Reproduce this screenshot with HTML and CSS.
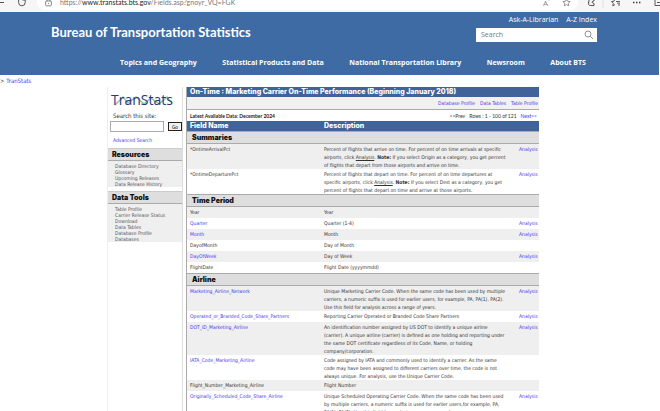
FILE: index.html
```html
<!DOCTYPE html>
<html lang="en">
<head>
<meta charset="utf-8">
<title>TranStats - Fields</title>
<link rel="stylesheet" href="styles.css">
</head>
<body>
<div class="browser">
  <div class="nav-icons">
    <svg width="30" height="10" viewBox="0 0 30 10" fill="none" stroke="#555"><path d="M0 2.500h4M18.600 0v2.500a3.300 3.300 0 0 0 6.600 0V0M22.500 0h2.700"/></svg>
  </div>
  <div class="address">
    <svg width="7" height="8" viewBox="0 0 7 8" fill="none" stroke="#666" stroke-width=".8"><rect x=".6" y="1" width="5.800" height="4.800" rx="1"/><path d="M2 1V0M5 1V0M3 3.500h1"/></svg>
    <span class="url">https://<b>www.transtats.bts.gov</b>/Fields.asp?gnoyr_VQ=FGK</span>
    <span class="reader">A<sup>&#8307;</sup></span>
    <svg width="9" height="8" viewBox="0 0 9 8" fill="none" stroke="#777" stroke-width=".8"><path d="M4.500-1 5.500 1.200 8 1.600 6.300 3.300 6.700 5.800 4.500 4.600 2.300 5.800 2.700 3.300 1 1.600 3.500 1.200z"/></svg>
  </div>
  <svg class="tools" width="73" height="8" viewBox="0 0 73 8" fill="none" stroke="#333" stroke-width=".8"><path d="M2 0 1.500 4.500Q2 5.500 4 5.500H7V3.500Q5 3 5 2T7 1V0M2 2.500 1 2"/><path d="M16 0v8" stroke="#ddd"/><path d="M28-1 27 1.200 24.500 1.600 26.300 3.300 25.800 5.800 28 4.600M29 1.500h4M30 3.200h3M31 5h2"/><path d="M46 2.500h1.400M49 2.500h1.400M52 2.500h1.400" stroke-width="1.400"/><path d="M68 0v5.500h5M70 2.500h3"/></svg>
</div>

<header class="banner">
  <div class="top">
    <h1>Bureau of Transportation Statistics</h1>
    <div class="utility">
      <div class="utility-links"><a href="#">Ask-A-Librarian</a><a href="#">A-Z Index</a></div>
      <form class="site-search">
        <input type="text" placeholder="Search" aria-label="Search">
        <button type="button" aria-label="Submit search"><svg width="10" height="10" viewBox="0 0 10 10" fill="none" stroke="#777" stroke-width=".8"><circle cx="4" cy="4" r="3"/><path d="M6.200 6.200 9 9"/></svg></button>
      </form>
    </div>
  </div>
  <nav><a href="#">Topics and Geography</a><a href="#">Statistical Products and Data</a><a href="#">National Transportation Library</a><a href="#">Newsroom</a><a href="#">About BTS</a></nav>
</header>

<div class="crumb">&gt; <a href="#">TranStats</a></div>

<div class="columns">
  <aside>
    <svg class="logo" width="68" height="16" viewBox="0 0 68 16" role="img" aria-label="TranStats"><path d="M5 12 13 4l5 6 8-6 8 7 7-6 8 6 8-7 5 6" fill="none" stroke="#8fc3aa" stroke-width="1.500"/><text x="1" y="12" class="logo-text">TranStats</text></svg>
    <label for="site">Search this site:</label>
    <div class="finder"><input id="site" type="text"><button type="button">Go</button></div>
    <a class="advanced" href="#">Advanced Search</a>
    <h2>Resources</h2>
    <ul><li>Database Directory</li><li>Glossary</li><li>Upcoming Releases</li><li>Data Release History</li></ul>
    <h2>Data Tools</h2>
    <ul><li>Table Profile</li><li>Carrier Release Status</li><li>Download</li><li>Data Tables</li><li>Database Profile</li><li>Databases</li></ul>
  </aside>

  <main>
    <h2 class="title">On-Time : Marketing Carrier On-Time Performance (Beginning January 2018)</h2>
    <div class="profile-links"><a href="#">Database Profile</a><a href="#">Data Tables</a><a href="#">Table Profile</a></div>
    <div class="status"><b>Latest Available Data: December 2024</b><span class="pager"><span>&lt;&lt;Prev</span><span>Rows : 1 - 100 of 121</span><a href="#">Next&gt;&gt;</a></span></div>
    <table>
      <colgroup><col class="field"><col><col class="action"></colgroup>
      <thead><tr><th>Field Name</th><th colspan="2">Description</th></tr></thead>
      <tbody>
        <tr class="group"><th colspan="3">Summaries</th></tr>
        <tr><td>*OntimeArrivalPct</td><td>Percent of flights that arrive on time. For percent of on time arrivals at specific<br>airports, click <u>Analysis</u>. <b>Note:</b> If you select Origin as a category, you get percent<br>of flights that depart from those airports and arrive on time.</td><td><a href="#">Analysis</a></td></tr>
        <tr><td>*OntimeDeparturePct</td><td>Percent of flights that depart on time. For percent of on time departures at<br>specific airports, click <u>Analysis</u>. <b>Note:</b> If you select Dest as a category, you get<br>percent of flights that depart on time and arrive at those airports.</td><td><a href="#">Analysis</a></td></tr>
      </tbody>
      <tbody>
        <tr class="group"><th colspan="3">Time Period</th></tr>
        <tr><td>Year</td><td>Year</td><td></td></tr>
        <tr><td><a href="#">Quarter</a></td><td>Quarter (1-4)</td><td><a href="#">Analysis</a></td></tr>
        <tr><td><a href="#">Month</a></td><td>Month</td><td><a href="#">Analysis</a></td></tr>
        <tr><td>DayofMonth</td><td>Day of Month</td><td></td></tr>
        <tr><td><a href="#">DayOfWeek</a></td><td>Day of Week</td><td><a href="#">Analysis</a></td></tr>
        <tr><td>FlightDate</td><td>Flight Date (yyyymmdd)</td><td></td></tr>
      </tbody>
      <tbody>
        <tr class="group"><th colspan="3">Airline</th></tr>
        <tr><td><a href="#">Marketing_Airline_Network</a></td><td>Unique Marketing Carrier Code. When the same code has been used by multiple<br>carriers, a numeric suffix is used for earlier users, for example, PA, PA(1), PA(2).<br>Use this field for analysis across a range of years.</td><td><a href="#">Analysis</a></td></tr>
        <tr><td><a href="#">Operated_or_Branded_Code_Share_Partners</a></td><td>Reporting Carrier Operated or Branded Code Share Partners</td><td><a href="#">Analysis</a></td></tr>
        <tr><td><a href="#">DOT_ID_Marketing_Airline</a></td><td>An identification number assigned by US DOT to identify a unique airline<br>(carrier). A unique airline (carrier) is defined as one holding and reporting under<br>the same DOT certificate regardless of its Code, Name, or holding<br>company/corporation.</td><td><a href="#">Analysis</a></td></tr>
        <tr><td><a href="#">IATA_Code_Marketing_Airline</a></td><td>Code assigned by IATA and commonly used to identify a carrier. As the same<br>code may have been assigned to different carriers over time, the code is not<br>always unique. For analysis, use the Unique Carrier Code.</td><td></td></tr>
        <tr><td>Flight_Number_Marketing_Airline</td><td>Flight Number</td><td></td></tr>
        <tr><td><a href="#">Originally_Scheduled_Code_Share_Airline</a></td><td>Unique Scheduled Operating Carrier Code. When the same code has been used<br>by multiple carriers, a numeric suffix is used for earlier users,for example, PA,<br>PA(1), PA(2). Use this field for analysis across a range of years.</td><td><a href="#">Analysis</a></td></tr>
      </tbody>
    </table>
  </main>
</div>
</body>
</html>
```

FILE: styles.css
```css
* { box-sizing: border-box; }
html, body { height: 100%; }
body {
  margin: 0;
  overflow: hidden;
  background: #fff;
  color: #333;
  font: 5px/8px "DejaVu Sans Condensed", "DejaVu Sans", sans-serif;
}
a { color: #4338f0; text-decoration: none; }
h1, h2, ul { margin: 0; padding: 0; }
svg { display: block; flex: none; }

.browser { display: flex; height: 12px; background: #f6f6f7; }
.nav-icons { width: 37px; }
.address {
  flex: 1;
  display: flex;
  height: 10px;
  padding: 0 7px 0 8px;
  background: #fff;
  border-bottom-left-radius: 8px;
  border-bottom-right-radius: 8px;
}
.url { flex: 1; padding-left: 8px; margin-top: -2px; font: 7px/9px Lato, sans-serif; color: #777; }
.url b { font-weight: 400; color: #222; }
.reader { margin-top: -2px; padding-right: 12px; font: 8px/9px "Open Sans", sans-serif; color: #888; }
.reader sup { font-size: 6px; line-height: 0; }
.tools { margin-left: 9px; }

.banner {
  height: 63px;
  margin-right: 1px;
  padding: 0 62px 0 51px;
  background: #3e6ba3;
  font-family: "Open Sans", sans-serif;
}
.banner a { color: #fff; }
.top { display: flex; justify-content: space-between; height: 42px; }
h1 { padding-top: 11px; font: 700 13px/18px Lato, sans-serif; color: #fff; }
.utility { width: 121px; }
.utility-links { display: flex; justify-content: flex-end; gap: 8px; padding-top: 3px; font-size: 7px; line-height: 10px; }
.site-search { display: flex; height: 14px; margin-top: 3px; background: #fff; }
.site-search input { flex: 1; min-width: 0; border: 0; padding: 0 5px; font: 7px/14px "Open Sans", sans-serif; background: none; }
.site-search input::placeholder { color: #777; }
.site-search button { border: 0; padding: 0 3px; background: none; }
nav { display: flex; justify-content: space-between; padding: 4px 11px 0 69px; font-size: 7px; font-weight: 700; line-height: 10px; }

.crumb { padding-top: 2px; font-size: 6px; }
.columns { display: grid; grid-template-columns: 76px minmax(0, 353px); gap: 3px; padding: 2px 0 0 107px; }

aside { padding-top: 6px; border-left: 1px solid #eee; border-right: 1px solid #ddd; }
.logo { margin: 0 0 3px 2px; }
.logo-text { font: 14px "Open Sans", sans-serif; fill: #2a397f; }
aside label { display: block; padding-left: 5px; font-size: 6px; line-height: 8px; }
.finder { display: flex; justify-content: space-between; align-items: center; padding: 1px 0 0 2px; }
.finder input { width: 54px; height: 11px; border: 1px solid #aaa; padding: 0 2px; font-size: 6px; }
.finder button { width: 14px; height: 9px; border: 1px solid #222; padding: 0; background: #f0f0f0; font: 5px/6px "DejaVu Sans Condensed", sans-serif; }
.advanced { display: block; padding: 4px 0 4px 5px; }
aside h2 { padding-left: 4px; background: #dedede; border-top: 1px solid #ccc; border-bottom: 1px solid #aaa; font: 900 7px/11px Inter, sans-serif; color: #111; }
aside ul { margin-bottom: 4px; padding: 2px 0 0 7px; list-style: none; background: #efefef; line-height: 6px; color: #555; }

main { border-left: 1px solid #aaa; }
.title, thead th { background: #406399; color: #fff; font: 800 7px/10px Inter, sans-serif; text-align: left; }
.title { padding-left: 3px; white-space: nowrap; }
.profile-links { display: flex; justify-content: flex-end; align-items: center; gap: 5px; height: 13px; padding: 0 1px; background: #f1f1ef; border-bottom: 1px solid #aaa; }
.status { display: flex; justify-content: space-between; padding: 2px 2px 1px 3px; font-family: Lato, sans-serif; }
.status b { color: #222; }
.pager { display: flex; gap: 4px; }

table { width: 100%; border-collapse: separate; border-spacing: 0; table-layout: fixed; }
.field { width: 134px; }
.action { width: 20px; }
th, td { padding: 0 0 0 3px; text-align: left; vertical-align: top; }
td { height: 11px; padding-top: 1px; white-space: nowrap; }
td:last-child { padding-left: 0; }
tbody tr:nth-child(even) { background: #efefef; }
.group th { height: 13px; padding-left: 5px; background: #dedede; border-top: 1px solid #aaa; border-bottom: 1px solid #aaa; font: 900 7px/11px Inter, sans-serif; color: #111; }
```
